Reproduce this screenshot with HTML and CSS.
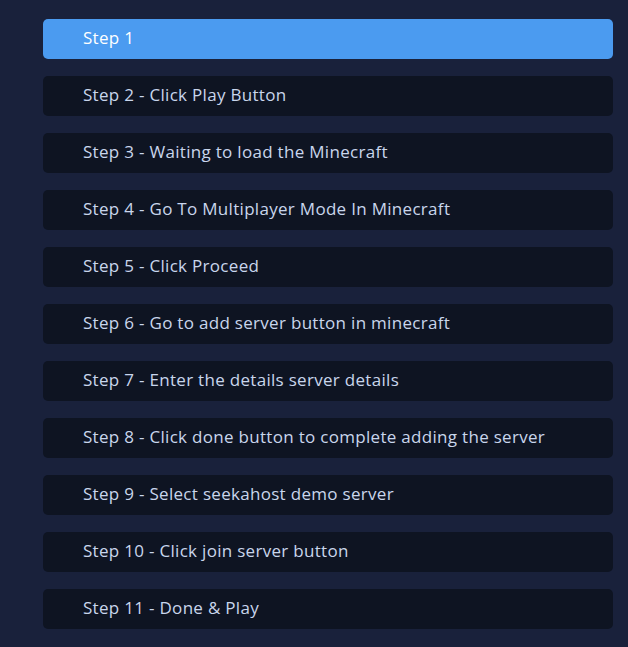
FILE: index.html
```html
<!DOCTYPE html>
<html lang="en">
<head>
  <meta charset="UTF-8">
  <title>Steps</title>
  <link rel="stylesheet" href="styles.css">
</head>
<body>
  <ul class="steps">
    <li class="step active">Step 1</li>
    <li class="step">Step 2 - Click Play Button</li>
    <li class="step">Step 3 - Waiting to load the Minecraft</li>
    <li class="step">Step 4 - Go To Multiplayer Mode In Minecraft</li>
    <li class="step">Step 5 - Click Proceed</li>
    <li class="step">Step 6 - Go to add server button in minecraft</li>
    <li class="step">Step 7 - Enter the details server details</li>
    <li class="step">Step 8 - Click done button to complete adding the server</li>
    <li class="step">Step 9 - Select seekahost demo server</li>
    <li class="step">Step 10 - Click join server button</li>
    <li class="step">Step 11 - Done &amp; Play</li>
  </ul>
</body>
</html>
```

FILE: styles.css
```css
body {
  margin: 0;
  background: #19213b;
  font-family: "Open Sans", sans-serif;
}

.steps {
  list-style: none;
  margin: 0;
  padding: 19px 15px 0 43px;
  display: flex;
  flex-direction: column;
  gap: 17px;
}

.step {
  box-sizing: border-box;
  height: 40px;
  display: flex;
  align-items: center;
  padding: 0 0 4px 40px;
  background: #0e1422;
  border-radius: 5px;
  color: #c9d6ec;
  font-size: 17px;
  font-weight: 500;
  letter-spacing: 0.3px;
}

.step.active {
  background: #4b9bf0;
  color: #fff;
}
```
